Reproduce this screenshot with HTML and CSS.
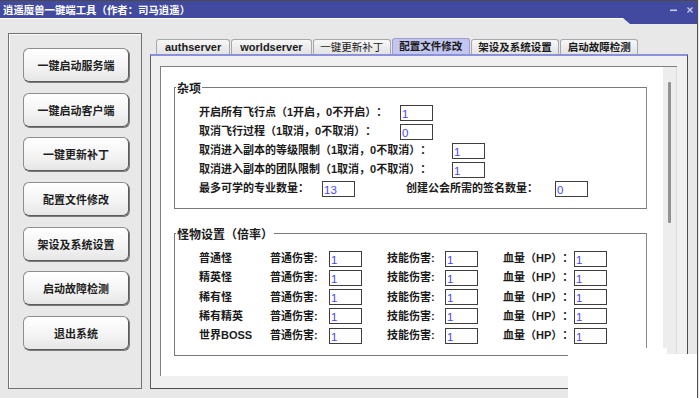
FILE: index.html
```html
<!DOCTYPE html>
<html lang="zh-CN">
<head>
<meta charset="utf-8">
<title>逍遥魔兽一键端工具</title>
<link rel="stylesheet" href="styles.css">
</head>
<body>
<div class="window">
  <header class="titlebar">
    <span class="title">逍遥魔兽一键端工具（作者：司马逍遥）</span>
    <div class="win-ctrls">
      <svg class="ctrl" width="7" height="6" viewBox="0 0 7 6"><rect x="0" y="2.5" width="7" height="1.6" fill="#c9cce6"/></svg>
      <svg class="ctrl" width="6" height="6" viewBox="0 0 6 6"><path d="M0.5 0.5 L5.5 5.5 M5.5 0.5 L0.5 5.5" stroke="#c9cce6" stroke-width="1.3"/></svg>
    </div>
  </header>
  <div class="notch"></div>
  <div class="main">
    <nav class="sidebar">
      <button class="side-btn">一键启动服务端</button>
      <button class="side-btn">一键启动客户端</button>
      <button class="side-btn">一键更新补丁</button>
      <button class="side-btn">配置文件修改</button>
      <button class="side-btn">架设及系统设置</button>
      <button class="side-btn">启动故障检测</button>
      <button class="side-btn">退出系统</button>
    </nav>
    <section class="tabarea">
      <div class="tabs">
        <span class="tab">authserver</span>
        <span class="tab">worldserver</span>
        <span class="tab tab-cjk tab-light">一键更新补丁</span>
        <span class="tab tab-cjk active">配置文件修改</span>
        <span class="tab tab-cjk">架设及系统设置</span>
        <span class="tab tab-cjk">启动故障检测</span>
      </div>
      <div class="panel">
        <div class="scrollbox">
          <div class="content">
            <div class="group">
              <span class="caption">杂项</span>
              <div class="row"><span class="lbl w-a">开启所有飞行点（1开启，0不开启）：</span><span class="field">1</span></div>
              <div class="row"><span class="lbl w-a">取消飞行过程（1取消，0不取消）：</span><span class="field">0</span></div>
              <div class="row"><span class="lbl w-b">取消进入副本的等级限制（1取消，0不取消）：</span><span class="field">1</span></div>
              <div class="row"><span class="lbl w-b">取消进入副本的团队限制（1取消，0不取消）：</span><span class="field">1</span></div>
              <div class="row"><span class="lbl w-c">最多可学的专业数量：</span><span class="field">13</span><span class="lbl w-d">创建公会所需的签名数量：</span><span class="field">0</span></div>
            </div>
            <div class="group">
              <span class="caption">怪物设置（倍率）</span>
              <div class="mob-grid">
                <span class="lbl">普通怪</span><span class="lbl">普通伤害:</span><span class="field">1</span><span class="lbl pad">技能伤害:</span><span class="field">1</span><span class="lbl pad">血量（HP）：</span><span class="field">1</span>
                <span class="lbl">精英怪</span><span class="lbl">普通伤害:</span><span class="field">1</span><span class="lbl pad">技能伤害:</span><span class="field">1</span><span class="lbl pad">血量（HP）：</span><span class="field">1</span>
                <span class="lbl">稀有怪</span><span class="lbl">普通伤害:</span><span class="field">1</span><span class="lbl pad">技能伤害:</span><span class="field">1</span><span class="lbl pad">血量（HP）：</span><span class="field">1</span>
                <span class="lbl">稀有精英</span><span class="lbl">普通伤害:</span><span class="field">1</span><span class="lbl pad">技能伤害:</span><span class="field">1</span><span class="lbl pad">血量（HP）：</span><span class="field">1</span>
                <span class="lbl">世界BOSS</span><span class="lbl">普通伤害:</span><span class="field">1</span><span class="lbl pad">技能伤害:</span><span class="field">1</span><span class="lbl pad">血量（HP）：</span><span class="field">1</span>
              </div>
            </div>
          </div>
          <div class="vscroll"><div class="thumb"></div></div>
        </div>
      </div>
    </section>
  </div>
  <div class="patch"></div>
</div>
</body>
</html>
```
FILE: styles.css
```css
* { box-sizing: border-box; }
html, body { margin: 0; padding: 0; }
body {
  width: 699px;
  height: 398px;
  overflow: hidden;
  background: #e8e8e8;
  font-family: "Liberation Sans", "Noto Sans CJK SC", sans-serif;
  color: #1b1b1b;
  text-spacing-trim: space-all;
}
.window {
  position: relative;
  width: 698px;
  height: 398px;
  border-right: 1px solid #505050;
  background: #e8e8e8;
}
.titlebar {
  display: flex;
  align-items: center;
  height: 19px;
  background: #414a9e;
  border-top: 1px solid #4a4a4a;
  border-bottom: 1px solid #fdfdfd;
  padding-left: 3px;
}
.title {
  color: #ffffff;
  font-family: "Noto Sans CJK SC", sans-serif;
  font-size: 10.4px;
  font-weight: bold;
  line-height: 17px;
}
.win-ctrls {
  margin-left: auto;
  display: flex;
  align-items: center;
  gap: 10px;
  padding-right: 4px;
}
.ctrl { display: block; }
.notch {
  position: absolute;
  left: 623px;
  top: 18px;
  width: 74px;
  height: 6px;
  background: #414a9e;
  clip-path: polygon(0 0, 100% 0, 100% 100%, 7px 100%);
}
.main {
  display: flex;
  padding: 14px 0 0 8px;
}
.sidebar {
  width: 134px;
  height: 356px;
  border: 1px solid #727272;
  box-shadow: inset 1px 1px 0 #fbfbfb;
  display: flex;
  flex-direction: column;
  gap: 10.67px;
  padding: 14px 0 0 14px;
}
.side-btn {
  width: 106px;
  height: 34px;
  padding: 0;
  border: 1px solid #8e8e8e;
  border-right-color: #5c5c5c;
  border-bottom-color: #5c5c5c;
  border-radius: 6px;
  background: linear-gradient(#ffffff, #f4f4f4 55%, #e6e6e6);
  box-shadow: 1px 1px 0 #7a7a7a;
  font-family: "Noto Sans CJK SC", sans-serif;
  font-size: 11px;
  font-weight: bold;
  color: #1e1e1e;
}
.tabarea {
  width: 538px;
  height: 356px;
  margin-left: 8px;
  padding-top: 5px;
  display: flex;
  flex-direction: column;
}
.tabs {
  display: flex;
  align-items: flex-end;
  height: 16px;
  padding-left: 6px;
  gap: 1px;
}
.tab {
  height: 15px;
  padding: 0 8px;
  border: 1px solid #a8a8a8;
  border-bottom: none;
  border-radius: 3px 3px 0 0;
  background: linear-gradient(#f7f7f7, #e3e3e3);
  font-size: 11px;
  font-weight: bold;
  line-height: 14px;
  color: #1a1a1a;
  white-space: nowrap;
}
.tab-cjk {
  padding: 0 6.5px;
  font-size: 10.5px;
}
.tab-light { font-weight: normal; }
.tab.active {
  height: 16px;
  background: #c3c6ee;
  border-color: #9b9dd2;
  line-height: 15px;
}
.panel {
  flex: 1;
  display: flex;
  background: #f0f0f0;
  border-top: 2px solid #8b90dc;
  border-left: 1px solid #5e5e5e;
  border-right: 1px solid #4e4e4e;
  border-bottom: 1px solid #4e4e4e;
  padding: 10px 10px 12px 9px;
}
.scrollbox {
  flex: 1;
  display: flex;
  border-top: 1px solid #808080;
  border-left: 1px solid #808080;
}
.content {
  flex: 1;
  background: #ffffff;
  padding: 20px 0 0 13px;
  overflow: hidden;
}
.vscroll {
  width: 14px;
  background: #ededed;
  border-right: 1px solid #dedede;
}
.thumb {
  width: 3px;
  height: 141px;
  margin: 15px 0 0 5px;
  background: #929292;
  border-radius: 1px;
}
.group {
  position: relative;
  width: 473px;
  border: 1px solid #7a7a7a;
  border-right-color: #8a8a8a;
  padding: 15px 0 10px 24px;
}
.group + .group { margin-top: 24px; }
.caption {
  position: absolute;
  left: 1px;
  top: -7px;
  padding: 0 1px;
  background: #ffffff;
  font-family: "Noto Sans CJK SC", sans-serif;
  font-size: 12px;
  font-weight: bold;
  line-height: 14px;
}
.row {
  display: flex;
  align-items: center;
  height: 19px;
}
.lbl {
  font-size: 11px;
  font-weight: bold;
  line-height: 19px;
  white-space: nowrap;
}
.w-a { width: 201px; }
.w-b { width: 253px; }
.w-c { width: 123px; }
.w-d { width: 149px; margin-left: 51px; }
.field {
  display: block;
  width: 33px;
  height: 16px;
  border: 1px solid #3e3e3e;
  background: #ffffff;
  color: #4646ff;
  font-family: "Liberation Sans", sans-serif;
  font-size: 11.5px;
  font-weight: normal;
  line-height: 13px;
  padding: 2px 0 0 1px;
}
.mob-grid {
  display: grid;
  grid-template-columns: 71px 59px 33px 83px 33px 96px 33px;
  grid-auto-rows: 19.25px;
  align-items: center;
}
.pad { padding-left: 25px; }
.patch {
  position: absolute;
  left: 568px;
  top: 348px;
  width: 129px;
  height: 50px;
  background: #ffffff;
  clip-path: polygon(0 0, 99px 0, 99px 6px, 100% 6px, 100% 100%, 0 100%);
}
```
